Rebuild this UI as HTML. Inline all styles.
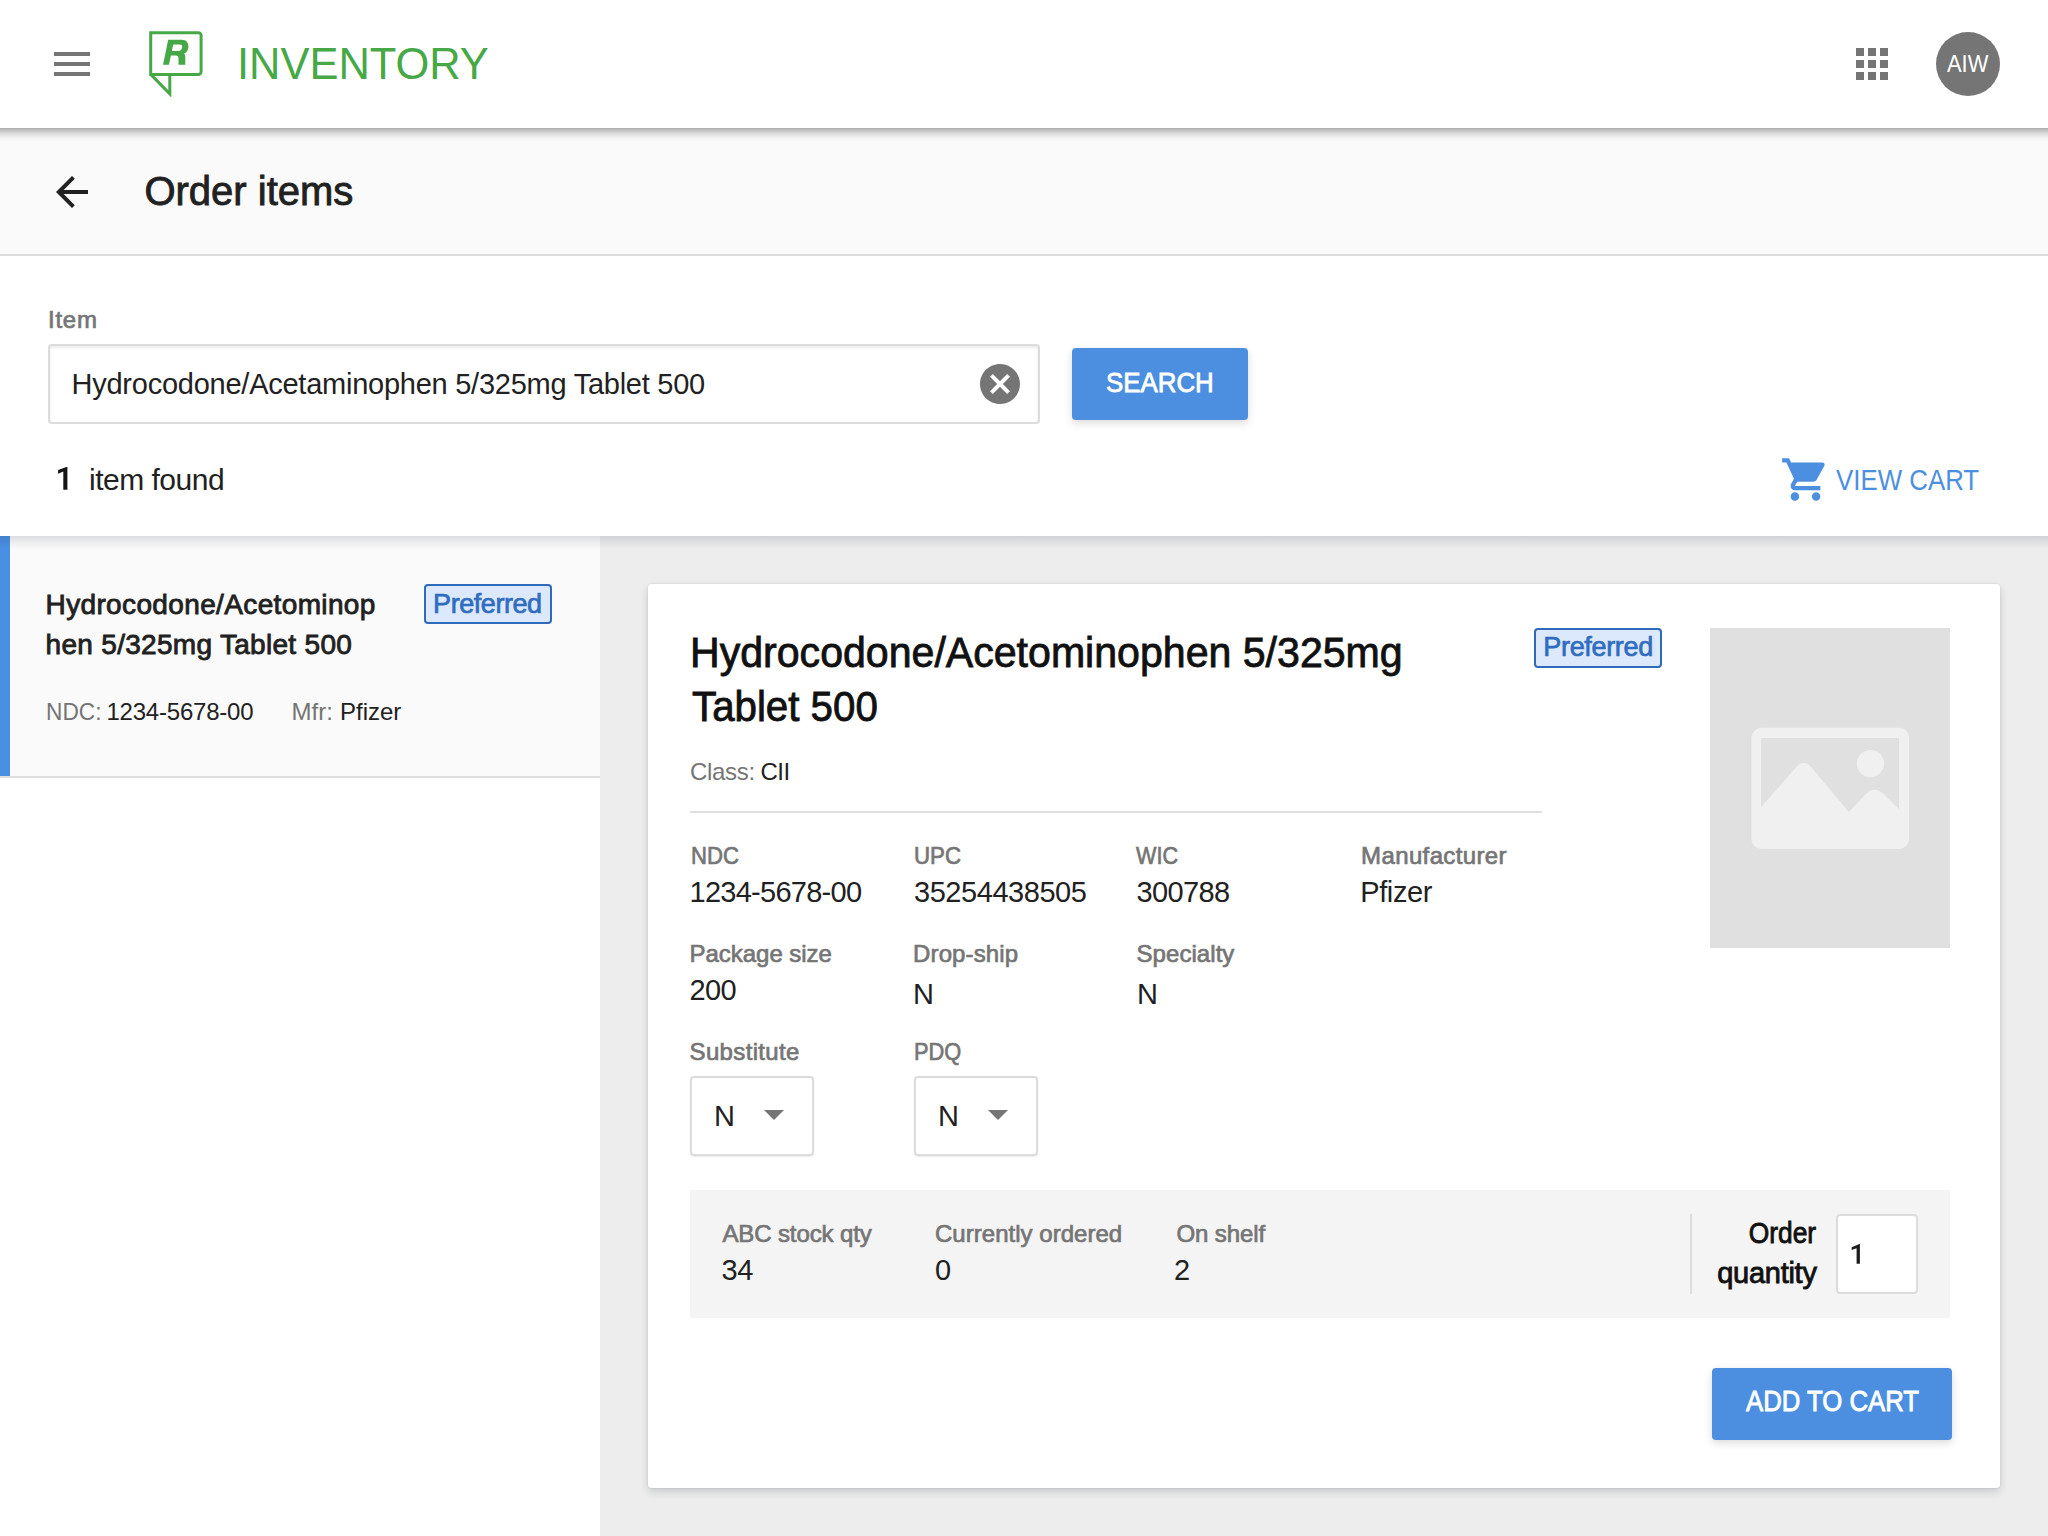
<!DOCTYPE html>
<html><head><meta charset="utf-8"><title>Order items</title>
<style>
html,body{margin:0;padding:0;}
body{width:2048px;height:1536px;position:relative;overflow:hidden;background:#fff;font-family:"Liberation Sans", sans-serif;}
.t{position:absolute;white-space:nowrap;}
.r{position:absolute;}
svg.r{overflow:visible;}
</style></head><body>
<div class="r" style="left:0px;top:536px;width:600px;height:1000px;background:#fff;"></div>
<div class="r" style="left:600px;top:536px;width:1448px;height:1000px;background:#ededed;"></div>
<div class="r" style="left:0px;top:536px;width:600px;height:242px;background:#fafafa;"></div>
<div class="r" style="left:0px;top:776px;width:600px;height:2px;background:#dddddd;"></div>
<div class="r" style="left:0px;top:536px;width:10px;height:240px;background:#4a90e2;"></div>
<div class="r" style="left:0px;top:536px;width:2048px;height:13px;background:linear-gradient(to bottom, rgba(10,20,40,0.13), rgba(10,20,40,0.07) 40%, rgba(10,20,40,0.0));"></div>
<div class="r" style="left:0px;top:256px;width:2048px;height:280px;background:#fff;"></div>
<div class="r" style="left:0px;top:128px;width:2048px;height:128px;background:#fafafa;"></div>
<div class="r" style="left:0px;top:254px;width:2048px;height:2px;background:#dddddd;"></div>
<div class="r" style="left:0px;top:128px;width:2048px;height:14px;background:linear-gradient(to bottom, rgba(0,0,0,0.31), rgba(0,0,0,0.20) 22%, rgba(0,0,0,0.10) 45%, rgba(0,0,0,0.04) 68%, rgba(0,0,0,0.0));"></div>
<div class="r" style="left:0px;top:0px;width:2048px;height:128px;background:#fff;"></div>
<div class="r" style="left:54px;top:52px;width:36px;height:4px;background:#757575;"></div>
<div class="r" style="left:54px;top:62px;width:36px;height:4px;background:#757575;"></div>
<div class="r" style="left:54px;top:72px;width:36px;height:4px;background:#757575;"></div>
<svg class="r" style="left:140px;top:24px;" width="72" height="80" viewBox="140 24 72 80">
<path d="M150.7 32.7 H198.4 A2.7 2.7 0 0 1 201.1 35.4 V71.7 A2.7 2.7 0 0 1 198.4 74.4 H150.7 Z" fill="none" stroke="#47a847" stroke-width="3"/>
<path d="M150.7 74.4 L169.8 93.8 V74.4" fill="none" stroke="#47a847" stroke-width="3" stroke-miterlimit="10"/>
<path fill-rule="evenodd" fill="#47a847" d="M163 64.8 L168.2 39.7 L182 39.7 C186.2 39.7 188.4 42.6 188.4 46.4 C188.4 50.2 186.6 52.8 183.9 53.7 C185 54.4 185.3 55.6 185.3 57.2 L185.3 64.8 L178.5 64.8 L178.5 58.4 C178.5 56.4 177.6 55.6 175.7 55.6 L170.9 55.6 L169 64.8 Z M173.2 44.6 L179.8 44.6 C181.4 44.6 182.2 45.5 182.2 46.8 C182.2 49.4 180.6 51 178.3 51 L171.9 51 Z"/>
</svg>
<div class="t" style="top:35.25px;font-size:44px;line-height:57px;color:#47a847;left:236.74px;transform:scaleX(0.9872);transform-origin:left top;">INVENTORY</div>
<div class="r" style="left:1856px;top:48px;width:8px;height:8px;background:#757575;"></div>
<div class="r" style="left:1856px;top:60px;width:8px;height:8px;background:#757575;"></div>
<div class="r" style="left:1856px;top:72px;width:8px;height:8px;background:#757575;"></div>
<div class="r" style="left:1868px;top:48px;width:8px;height:8px;background:#757575;"></div>
<div class="r" style="left:1868px;top:60px;width:8px;height:8px;background:#757575;"></div>
<div class="r" style="left:1868px;top:72px;width:8px;height:8px;background:#757575;"></div>
<div class="r" style="left:1880px;top:48px;width:8px;height:8px;background:#757575;"></div>
<div class="r" style="left:1880px;top:60px;width:8px;height:8px;background:#757575;"></div>
<div class="r" style="left:1880px;top:72px;width:8px;height:8px;background:#757575;"></div>
<div class="r" style="left:1936px;top:32px;width:64px;height:64px;background:#757575;border-radius:50%;"></div>
<div class="t" style="top:48.23px;font-size:24px;line-height:31px;color:#fff;left:1946.9px;transform:scaleX(0.9130);transform-origin:left top;">AIW</div>
<svg class="r" style="left:48px;top:168px;" width="48" height="48" viewBox="0 0 24 24"><path fill="#212121" d="M20 11H7.83l5.59-5.59L12 4l-8 8 8 8 1.41-1.41L7.83 13H20v-2z"/></svg>
<div class="t" style="top:165.24px;font-size:40px;line-height:52px;color:#212121;left:144.45px;-webkit-text-stroke:0.85px #212121;">Order items</div>
<div class="t" style="top:303.73px;font-size:24px;line-height:31px;color:#757575;left:48.0px;letter-spacing:0.75px;-webkit-text-stroke:0.7px #757575;">Item</div>
<div class="r" style="left:48px;top:344px;width:992px;height:80px;background:#fff;border:2px solid #dcdcdc;border-radius:4px;box-sizing:border-box;box-shadow:inset 0 2px 3px rgba(0,0,0,0.08);"></div>
<div class="t" style="top:364.95px;font-size:29px;line-height:38px;color:#212121;left:71.55px;letter-spacing:-0.248px;">Hydrocodone/Acetaminophen 5/325mg Tablet 500</div>
<svg class="r" style="left:976px;top:360px;" width="48" height="48" viewBox="0 0 24 24"><path fill="#757575" d="M12 2C6.47 2 2 6.47 2 12s4.47 10 10 10 10-4.47 10-10S17.53 2 12 2zm5 13.59L15.59 17 12 13.41 8.41 17 7 15.59 10.59 12 7 8.41 8.41 7 12 10.59 15.59 7 17 8.41 13.41 12 17 15.59z"/></svg>
<div class="r" style="left:1072px;top:348px;width:176px;height:72px;background:#4c8fe0;border-radius:4px;box-shadow:0 3px 8px rgba(0,0,0,0.15);"></div>
<div class="t" style="top:364.75px;font-size:28px;line-height:36px;color:#fff;left:1106.0px;-webkit-text-stroke:0.85px #fff;transform:scaleX(0.9230);transform-origin:left top;">SEARCH</div>
<svg class="r" style="left:50px;top:460px;" width="30" height="35" viewBox="50 460 30 35"><path fill="#151515" d="M67.4 467.1 V489.7 H63.3 V471.6 L58.1 473.7 V470.1 L66.4 467.1 Z"/><path fill="#1c1c1c" d="M1859.9 1244.1 V1263.8 H1856.6 V1248.3 L1851.7 1250 V1247.2 L1859.4 1244.1 Z"/></svg>
<div class="t" style="top:460.11px;font-size:30px;line-height:39px;color:#212121;left:89.0px;letter-spacing:-0.5px;">item found</div>
<svg class="r" style="left:1780px;top:454px;" width="51" height="51" viewBox="0 0 24 24"><path fill="#4c8fe0" d="M7 18c-1.1 0-1.99.9-1.99 2S5.9 22 7 22s2-.9 2-2-.9-2-2-2zM1 2v2h2l3.6 7.59-1.35 2.45c-.16.28-.25.61-.25.96 0 1.1.9 2 2 2h12v-2H7.42c-.14 0-.25-.11-.25-.25l.03-.12.9-1.63h7.45c.75 0 1.41-.41 1.75-1.03l3.58-6.49c.08-.14.12-.31.12-.48 0-.55-.45-1-1-1H5.21l-.94-2H1zm16 16c-1.1 0-1.99.9-1.99 2s.89 2 1.99 2 2-.9 2-2-.9-2-2-2z"/></svg>
<div class="t" style="top:460.95px;font-size:29px;line-height:38px;color:#4c8fe0;left:1836.34px;transform:scaleX(0.8913);transform-origin:left top;">VIEW CART</div>
<div class="t" style="top:586.90px;font-size:28px;line-height:36px;color:#212121;left:45.55px;letter-spacing:0.363px;-webkit-text-stroke:0.85px #212121;">Hydrocodone/Acetominop</div>
<div class="t" style="top:626.90px;font-size:28px;line-height:36px;color:#212121;left:45.55px;letter-spacing:0.303px;-webkit-text-stroke:0.85px #212121;">hen 5/325mg Tablet 500</div>
<div class="r" style="left:424px;top:584px;width:128px;height:40px;background:#dce8fb;border:2px solid #2f6bbb;border-radius:4px;box-sizing:border-box;"></div>
<div class="t" style="top:586.54px;font-size:27px;line-height:35px;color:#2f6dc0;left:433.1px;letter-spacing:-0.45px;-webkit-text-stroke:0.7px #2f6dc0;">Preferred</div>
<div class="t" style="top:695.73px;font-size:24px;line-height:31px;color:#757575;left:45.82px;transform:scaleX(0.9455);transform-origin:left top;">NDC:</div>
<div class="t" style="top:696.18px;font-size:24px;line-height:31px;color:#212121;left:106.45px;letter-spacing:-0.21px;">1234-5678-00</div>
<div class="t" style="top:696.18px;font-size:24px;line-height:31px;color:#757575;left:291.55px;">Mfr:</div>
<div class="t" style="top:696.18px;font-size:24px;line-height:31px;color:#212121;left:340.0px;">Pfizer</div>
<div class="r" style="left:648px;top:584px;width:1352px;height:904px;background:#fff;border-radius:4px;box-shadow:0 4px 9px rgba(25,35,55,0.17), 0 0 3px rgba(25,35,55,0.10);"></div>
<div class="t" style="top:624.95px;font-size:42px;line-height:55px;color:#111;left:690.0px;-webkit-text-stroke:0.85px #111;transform:scaleX(0.9783);transform-origin:left top;">Hydrocodone/Acetominophen 5/325mg</div>
<div class="t" style="top:679.05px;font-size:42px;line-height:55px;color:#111;left:691.8px;-webkit-text-stroke:0.85px #111;transform:scaleX(0.9585);transform-origin:left top;">Tablet 500</div>
<div class="r" style="left:1534px;top:628px;width:128px;height:40px;background:#dce8fb;border:2px solid #2f6bbb;border-radius:4px;box-sizing:border-box;"></div>
<div class="t" style="top:629.82px;font-size:27px;line-height:35px;color:#2f6dc0;left:1543.36px;letter-spacing:-0.338px;-webkit-text-stroke:0.7px #2f6dc0;">Preferred</div>
<div class="r" style="left:1710px;top:628px;width:240px;height:320px;background:#e0e0e0;"></div>
<svg class="r" style="left:1740px;top:720px;" width="180" height="140" viewBox="1740 720 180 140">
<path fill-rule="evenodd" fill="#f0f0f0" d="M1761.4 727.75 H1899.1 A10 10 0 0 1 1909.1 737.75 V839 A10 10 0 0 1 1899.1 849 H1761.4 A10 10 0 0 1 1751.4 839 V737.75 A10 10 0 0 1 1761.4 727.75 Z M1761.1 738 H1899.1 V809.3 L1884.1 794.5 Q1874.5 785 1865.5 794.5 L1848.9 812.1 L1810.9 767 Q1803.8 758.6 1796.4 767 L1761.1 807 Z"/>
<circle cx="1870.5" cy="763.6" r="13.6" fill="#f0f0f0"/>
</svg>
<div class="t" style="top:756.18px;font-size:24px;line-height:31px;color:#757575;left:690px;letter-spacing:-0.3px;">Class:</div>
<div class="t" style="top:756.18px;font-size:24px;line-height:31px;color:#212121;left:760.46px;letter-spacing:-0.44px;">CII</div>
<div class="r" style="left:690px;top:811px;width:852px;height:2px;background:#e0e0e0;"></div>
<div class="t" style="top:840.18px;font-size:24px;line-height:31px;color:#757575;left:690.54px;-webkit-text-stroke:0.7px #757575;transform:scaleX(0.9222);transform-origin:left top;">NDC</div>
<div class="t" style="top:840.18px;font-size:24px;line-height:31px;color:#757575;left:913.64px;-webkit-text-stroke:0.7px #757575;transform:scaleX(0.9269);transform-origin:left top;">UPC</div>
<div class="t" style="top:839.64px;font-size:24px;line-height:31px;color:#757575;left:1136.46px;-webkit-text-stroke:0.7px #757575;transform:scaleX(0.9003);transform-origin:left top;">WIC</div>
<div class="t" style="top:840.18px;font-size:24px;line-height:31px;color:#757575;left:1361.1px;letter-spacing:0.368px;-webkit-text-stroke:0.7px #757575;">Manufacturer</div>
<div class="t" style="top:872.95px;font-size:29px;line-height:38px;color:#212121;left:689.55px;letter-spacing:-0.735px;">1234-5678-00</div>
<div class="t" style="top:872.95px;font-size:29px;line-height:38px;color:#212121;left:914.0px;letter-spacing:-0.45px;">35254438505</div>
<div class="t" style="top:872.95px;font-size:29px;line-height:38px;color:#212121;left:1136.55px;letter-spacing:-0.63px;">300788</div>
<div class="t" style="top:872.95px;font-size:29px;line-height:38px;color:#212121;left:1360.2px;letter-spacing:-0.36px;">Pfizer</div>
<div class="t" style="top:938.18px;font-size:24px;line-height:31px;color:#757575;left:689.55px;letter-spacing:-0.036px;-webkit-text-stroke:0.7px #757575;">Package size</div>
<div class="t" style="top:938.18px;font-size:24px;line-height:31px;color:#757575;left:913.1px;letter-spacing:0.118px;-webkit-text-stroke:0.7px #757575;">Drop-ship</div>
<div class="t" style="top:938.18px;font-size:24px;line-height:31px;color:#757575;left:1136.55px;letter-spacing:0.055px;-webkit-text-stroke:0.7px #757575;">Specialty</div>
<div class="t" style="top:970.95px;font-size:29px;line-height:38px;color:#212121;left:689.55px;letter-spacing:-0.675px;">200</div>
<div class="t" style="top:974.50px;font-size:29px;line-height:38px;color:#212121;left:913.1px;">N</div>
<div class="t" style="top:974.77px;font-size:29px;line-height:38px;color:#212121;left:1137.0px;">N</div>
<div class="t" style="top:1036.18px;font-size:24px;line-height:31px;color:#757575;left:689.55px;letter-spacing:0.35px;-webkit-text-stroke:0.7px #757575;">Substitute</div>
<div class="t" style="top:1036.18px;font-size:24px;line-height:31px;color:#757575;left:913.82px;-webkit-text-stroke:0.7px #757575;transform:scaleX(0.9085);transform-origin:left top;">PDQ</div>
<div class="r" style="left:690px;top:1076px;width:124px;height:80px;background:#fff;border:2px solid #dcdcdc;border-radius:4px;box-sizing:border-box;box-shadow:0 1px 2px rgba(0,0,0,0.08);"></div>
<div class="t" style="top:1097.40px;font-size:29px;line-height:38px;color:#212121;left:714.0px;">N</div>
<svg class="r" style="left:764px;top:1110px;" width="20" height="10" viewBox="0 0 20 10"><path d="M0 0H20L10 10Z" fill="#757575"/></svg>
<div class="r" style="left:914px;top:1076px;width:124px;height:80px;background:#fff;border:2px solid #dcdcdc;border-radius:4px;box-sizing:border-box;box-shadow:0 1px 2px rgba(0,0,0,0.08);"></div>
<div class="t" style="top:1097.40px;font-size:29px;line-height:38px;color:#212121;left:938.0px;">N</div>
<svg class="r" style="left:988px;top:1110px;" width="20" height="10" viewBox="0 0 20 10"><path d="M0 0H20L10 10Z" fill="#757575"/></svg>
<div class="r" style="left:690px;top:1190px;width:1260px;height:128px;background:#f4f4f4;"></div>
<div class="t" style="top:1218.18px;font-size:24px;line-height:31px;color:#757575;left:722.45px;letter-spacing:-0.12px;-webkit-text-stroke:0.7px #757575;">ABC stock qty</div>
<div class="t" style="top:1250.50px;font-size:29px;line-height:38px;color:#212121;left:721.55px;letter-spacing:-0.45px;">34</div>
<div class="t" style="top:1218.18px;font-size:24px;line-height:31px;color:#757575;left:935.0px;letter-spacing:0.025px;-webkit-text-stroke:0.7px #757575;">Currently ordered</div>
<div class="t" style="top:1250.95px;font-size:29px;line-height:38px;color:#212121;left:935px;">0</div>
<div class="t" style="top:1218.18px;font-size:24px;line-height:31px;color:#757575;left:1176.55px;letter-spacing:-0.125px;-webkit-text-stroke:0.7px #757575;">On shelf</div>
<div class="t" style="top:1250.95px;font-size:29px;line-height:38px;color:#212121;left:1174.0px;">2</div>
<div class="r" style="left:1690px;top:1214px;width:2px;height:80px;background:#dddddd;"></div>
<div class="t" style="top:1214.05px;font-size:29px;line-height:38px;color:#111;right:232.33999999999992px;text-align:right;-webkit-text-stroke:0.85px #111;transform:scaleX(0.9088);transform-origin:right top;">Order</div>
<div class="t" style="top:1253.95px;font-size:29px;line-height:38px;color:#111;right:231.3499999999999px;text-align:right;letter-spacing:-0.257px;-webkit-text-stroke:0.85px #111;">quantity</div>
<div class="r" style="left:1836px;top:1214px;width:82px;height:80px;background:#fff;border:2px solid #dcdcdc;border-radius:4px;box-sizing:border-box;"></div>
<svg class="r" style="left:1840px;top:1236px;" width="30" height="34" viewBox="1840 1236 30 34"><path fill="#1c1c1c" d="M1859.9 1244.1 V1263.8 H1856.6 V1248.3 L1851.7 1250 V1247.2 L1859.4 1244.1 Z"/></svg>
<div class="r" style="left:1712px;top:1368px;width:240px;height:72px;background:#4c8fe0;border-radius:4px;box-shadow:0 3px 8px rgba(0,0,0,0.15);"></div>
<div class="t" style="top:1382.15px;font-size:29px;line-height:38px;color:#fff;left:1745.62px;-webkit-text-stroke:0.85px #fff;transform:scaleX(0.8871);transform-origin:left top;">ADD TO CART</div>
</body></html>
